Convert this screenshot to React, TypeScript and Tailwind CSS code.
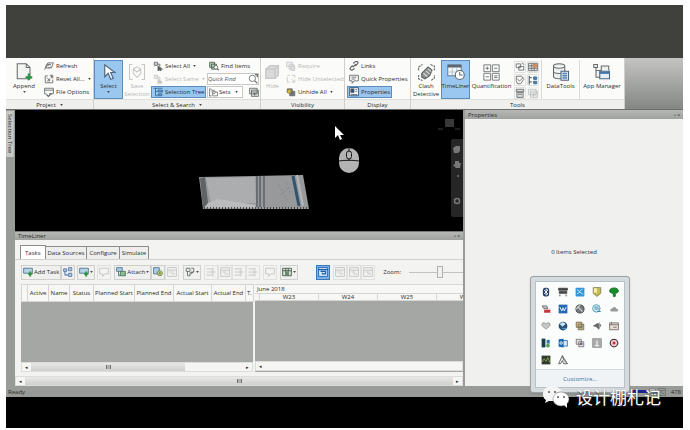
import type { ReactNode } from "react";

type Art = { className?: string; children: ReactNode; box?: string };

function Svg({ className = "h-[10px] w-[10px]", children, box = "0 0 16 16" }: Art) {
  return (
    <svg viewBox={box} className={`shrink-0 ${className}`} fill="none" stroke="#666b6b" strokeWidth="1.4" aria-hidden="true">
      {children}
    </svg>
  );
}

const art: Record<string, ReactNode> = {
  refresh: (<><path d="M3 11 6 3h9l-3 8zM1 14l3-8h7" /><path d="M6 8a3 3 0 0 1 5-2M11 9a3 3 0 0 1-5 1" /></>),
  reset: (<><path d="M2 3h4M2 3v11h12V9M9 2h5v5M5 6l4 5M9 7v4H5" /><path d="M12 3v3" strokeWidth="2.4" /></>),
  file: (<><path d="M1 2h14v9H8M1 2v9h3M1 5h14" /><path d="m4 12 3 3 5-5" strokeWidth="2" /></>),
  select: (<><path d="M2 2h5v5H2zM7 5h4v4" fill="#cfd3d3" /><path d="M8 8v8l2-2 2 2 1-1-1-2h3z" fill="#555" /></>),
  tree: (<><path d="M1 2h14M4 2v12h3M4 7h3" stroke="#366a9d" /><path d="M8 5h7v3H8zM8 11h6v3H8z" fill="#6ba3d5" stroke="#366a9d" /></>),
  find: (<><path d="M1 2h8v8H1zM4 5h8v8H4z" fill="#b7c8b8" stroke="#496950" /><circle cx="11" cy="10" r="3" fill="#fff" /><path d="m13 12 3 3" strokeWidth="2" /></>),
  sets: (<><path d="M1 1v14M1 2h4M1 14h4M5 4h4l2 3h4v7H7z" /><circle cx="9" cy="8" r="2" /></>),
  copy: (<><path d="M1 2h12v9H1zM4 5h11v10H4z" fill="#e5e6e4" /><path d="M4 8h11M7 11h5M9 9v5" /></>),
  require: (<><path d="M1 2h9v7H1zM5 6h8v7H5z" fill="#d7d9d8" /><path d="M8 9h6v6H8z" /></>),
  unselected: (<><path d="M2 2h4M9 2h5v4M2 5v8h4M9 13h5V9" /><path d="m9 8 5 5" /></>),
  unhide: (<><path d="M6 7h8v7H6z" fill="#777" /><path d="M2 3h8v6H2z" fill="#8c8d89" stroke="#666" /><circle cx="5" cy="7" r="3" fill="#d8bb35" stroke="#857b45" strokeWidth="1" /></>),
  links: (<><path d="m6 10 5-5M7 4l3-3c3-2 6 2 3 4l-3 3M9 12l-3 2c-3 2-6-2-3-4l3-3" strokeWidth="2" /></>),
  bubble: (<><path d="M1 2h14v9H8l-3 4v-4H1zM4 5h8M4 8h6" /></>),
  props: (<><path d="M1 1h14v13H1z" fill="#fff" stroke="#214e7a" /><path d="M3 3h5v6H3z" fill="#214e7a" /><path d="M10 4h3M10 7h3M3 12h10" /></>),
  task: (<><path d="M1 2h14v8H1z" fill="#b6d2e5" stroke="#4f7890" /><path d="M8 11h7M11.500 7v8" stroke="#289242" strokeWidth="3" /></>),
  chart: (<><path d="M1 3h5v4H1zM9 1h5v5H9zM3 7v6h6M9 10h5v5H9z" fill="#b8cee7" stroke="#5472a5" /></>),
  attach: (<><path d="M1 1h9v6H1zM4 7v7h3" fill="#aecae4" stroke="#4f7890" /><path d="M7 7h8v7H7z" fill="#8dbd90" stroke="#427758" /></>),
  attach2: (<><path d="M1 1h9v10H1z" fill="#aecae4" stroke="#4f7890" /><circle cx="11" cy="10" r="4" fill="#e4dc77" stroke="#53854c" /><path d="M11 8v4M9 10h4" /></>),
  links2: (<><path d="M2 2h6v5H2zM10 2h4v6h-4M4 7v7h4V9h5" /><path d="m9 12 5-5" /></>),
  row: (<><path d="M1 3h9M1 8h14M1 13h9M11 1v5M11 10v5" /><path d="m9 5 3 3-3 3" /></>),
  note: (<path d="M1 2h14v9H9l-3 4v-4H1z" />),
  columns: (<><path d="M1 2h14v12H1z" fill="#d5ddd5" stroke="#465c4a" /><path d="M6 2v12M10 2v12M1 6h14" stroke="#465c4a" /><path d="M7 7h2v6H7z" fill="#3c6f45" stroke="none" /></>),
  gantt: (<><path d="M1 1h14v14H1zM1 5h14M4 8h6M7 11h6" /></>),
  ganttOn: (<><path d="M1 1h14v14H1z" fill="#d9ebfb" stroke="#1b5fa9" /><path d="M1 4h14M4 7h8v4H7V9" stroke="#1b5fa9" strokeWidth="2" /></>),
  swap: (<><path d="M2 3h7v6H2zM6 7h8v6H6z" /><path d="M11 2c3 0 3 1 3 3" /></>),
  render: (<><path d="M1 2h14v12H1z" fill="#e9eaeb" /><path d="M1 6h14M1 10h14M6 2v12M10 2v12" /><path d="M8 3h6v6H8z" fill="#d98a50" stroke="none" /></>),
  script: (<><path d="M2 2h9l3 5-5 7H4L2 9z" /><path d="m4 6 3 4 6-6" /></>),
  compare: (<><path d="M2 1v14M2 4h4M2 11h4" strokeWidth="2" /><path d="M9 3h5v4H9zM9 10h5v4H9z" fill="#4f83bb" stroke="#356895" /></>),
  batch: (<><path d="M2 2h12v4H2zM3 7h10v8H3zM5 10h6" fill="#dadbd9" /></>),
};

function Glyph({ name, className }: { name: string; className?: string }) {
  return <Svg className={className}>{art[name]}</Svg>;
}

function Caret({ className = "" }: { className?: string }) {
  return (
    <svg viewBox="0 0 4 3" className={`h-[2px] w-[3px] shrink-0 ${className}`} aria-hidden="true">
      <path d="M0 0h4L2 3z" fill="#444" />
    </svg>
  );
}

function Cmd({ icon, text, caret, off, on }: { icon: string; text: string; caret?: boolean; off?: boolean; on?: boolean }) {
  return (
    <button
      type="button"
      disabled={off}
      className={`flex h-3 items-center gap-[2px] self-start whitespace-nowrap border px-px ${
        on ? "border-[#5b8dbd] bg-[#9ac7ef]" : "border-transparent"
      } ${off ? "opacity-35" : ""}`}
    >
      <Glyph name={icon} />
      <span>{text}</span>
      {caret && <Caret className="ml-px" />}
    </button>
  );
}

function Panel({ title, width, caret, children }: { title: string; width: string; caret?: boolean; children: ReactNode }) {
  return (
    <section className={`flex shrink-0 flex-col border-r border-[#cfd0ce] ${width}`}>
      <div className="flex h-[41px] items-stretch bg-[#fbfbfa] pt-[2px]">{children}</div>
      <h2 className="flex h-[10px] items-center justify-center gap-1 border-t border-[#dededc] bg-[#efefed]">
        {title}
        {caret && <Caret />}
      </h2>
    </section>
  );
}

function Big({ text, width, on, off, caret, children }: { text: ReactNode; width: string; on?: boolean; off?: boolean; caret?: boolean; children: ReactNode }) {
  return (
    <button
      type="button"
      disabled={off}
      className={`flex shrink-0 flex-col items-center border pt-px leading-[8px] ${width} ${
        on ? "border-[#5b8dbd] bg-[#9ac7ef]" : "border-transparent"
      } ${off ? "opacity-35" : ""}`}
    >
      <span className="flex h-[20px] items-center">{children}</span>
      <span className="whitespace-nowrap">{text}</span>
      {caret && <Caret className="mt-px" />}
    </button>
  );
}

function Ribbon() {
  return (
    <header className="flex h-[52px] overflow-hidden border-b border-[#6d6f6c] bg-linear-to-b from-[#c4c5c3] to-[#858784]">
      <Panel title="Project" width="w-[88px]" caret>
        <Big text="Append" width="w-9" caret>
          <Svg className="h-[18px] w-[18px]" box="0 0 24 24">
            <path d="M3 1h12l5 5v15H3zM15 1v5h5" fill="#f3f5f3" />
            <path d="M14 19h9M18.500 14v9" stroke="#2b9147" strokeWidth="3" />
          </Svg>
        </Big>
        <div className="flex flex-col gap-px">
          <Cmd icon="refresh" text="Refresh" />
          <Cmd icon="reset" text="Reset All..." caret />
          <Cmd icon="file" text="File Options" />
        </div>
      </Panel>

      <Panel title="Select & Search" width="w-[167px]" caret>
        <Big text="Select" width="w-[29px]" on caret>
          <Svg className="h-[17px] w-[14px]" box="0 0 14 20">
            <path d="M2 1v14l4-4 3 7 3-1-3-7h5z" fill="#fff" stroke="#50677c" />
          </Svg>
        </Big>
        <Big text={<>Save<br />Selection</>} width="w-7" off>
          <Svg className="h-[18px] w-[18px]" box="0 0 24 24">
            <path d="M6 2H2v20h4M18 2h4v20h-4M7 8l5-3 5 3v6l-5 5-5-5zM7 8l5 4 5-4" />
          </Svg>
        </Big>
        <div className="flex w-[56px] flex-col gap-px">
          <Cmd icon="select" text="Select All" caret />
          <Cmd icon="select" text="Select Same" caret off />
          <Cmd icon="tree" text="Selection Tree" on />
        </div>
        <div className="flex flex-1 flex-col gap-px pr-px">
          <Cmd icon="find" text="Find Items" />
          <label className="flex h-3 items-center border border-[#c8c9c7] bg-white">
            <input aria-label="Quick Find" placeholder="Quick Find" className="w-0 min-w-0 flex-1 italic placeholder:text-[#555]" />
            <Svg><circle cx="7" cy="7" r="5" /><path d="m11 11 4 4M11 1h4v4" strokeWidth="2" /></Svg>
          </label>
          <div className="flex h-3 items-center justify-between">
            <button type="button" className="flex h-3 items-center gap-px border border-[#c8c9c7] bg-white px-px">
              <Glyph name="sets" className="h-[9px] w-[9px]" />
              Sets
              <Caret className="mx-[3px]" />
            </button>
            <button type="button" aria-label="Manage sets"><Glyph name="copy" /></button>
          </div>
        </div>
      </Panel>

      <Panel title="Visibility" width="w-[84px]">
        <Big text="Hide" width="w-[23px]" off>
          <Svg className="h-[17px] w-[17px]" box="0 0 20 20">
            <path d="m2 6 5-4h10v11l-4 4H2zM2 6h11v11M13 6l4-4" fill="#9a9c9b" />
          </Svg>
        </Big>
        <div className="flex flex-col gap-px">
          <Cmd icon="require" text="Require" off />
          <Cmd icon="unselected" text="Hide Unselected" off />
          <Cmd icon="unhide" text="Unhide All" caret />
        </div>
      </Panel>

      <Panel title="Display" width="w-[66px]">
        <div className="flex flex-col gap-px pl-[2px]">
          <Cmd icon="links" text="Links" />
          <Cmd icon="bubble" text="Quick Properties" />
          <Cmd icon="props" text="Properties" on />
        </div>
      </Panel>

      <Panel title="Tools" width="w-[214px]">
        <Big text={<>Clash<br />Detective</>} width="w-[30px]">
          <Svg className="h-[19px] w-[19px]" box="0 0 24 24">
            <path d="m6 13 8-8 5 4-3 7-6 4-4-2z" fill="#8d908f" stroke="#5d605f" />
            <path d="m8 13 5 4M11 10l5 4M14 7l4 4" stroke="#d5d6d5" />
            <path d="M2 9V5l5-3M17 2l5 2v5M2 15v5l5 2M18 22l4-3v-4" strokeDasharray="3 1" />
          </Svg>
        </Big>
        <Big text="TimeLiner" width="w-[29px]" on>
          <Svg className="h-[18px] w-[18px]" box="0 0 24 24">
            <path d="M1 3h18v14H1z" fill="#f4f8fa" stroke="#677d8f" />
            <path d="M1 4h18" stroke="#5b6872" strokeWidth="4" />
            <path d="M7 7v9M13 7v6M1 12h12" stroke="#b4c3ce" />
            <circle cx="17" cy="16" r="6" fill="#fff" stroke="#58636b" />
            <path d="M17 12v4h4" />
          </Svg>
        </Big>
        <Big text="Quantification" width="w-[43px]">
          <Svg className="h-[17px] w-[17px]" box="0 0 20 20">
            <g strokeWidth="1">
              <path d="M1 1h8v8H1zM11 1h8v8h-8zM1 11h8v8H1zM11 11h8v8h-8zM3 5h4M5 3v4M13 5h4M3 15h4M13 14h4M13 16h4" />
            </g>
          </Svg>
        </Big>
        <div className="grid w-7 grid-cols-2 grid-rows-3 place-items-center">
          {["swap", "render", "script", "compare", "batch", "copy"].map((n, i) => (
            <button key={n} type="button" aria-label={n} className={`rounded-[1px] border border-[#e0e0de] ${i === 5 ? "opacity-40" : ""}`}>
              <Glyph name={n} className="h-[10px] w-[10px]" />
            </button>
          ))}
        </div>
        <div className="ml-px flex border-l border-[#d9dad8]">
          <Big text="DataTools" width="w-[37px]">
            <Svg className="h-[18px] w-[18px]" box="0 0 24 24">
              <path d="M2 4c0-4 15-4 15 0v14c0 4-15 4-15 0zM2 4c0 4 15 4 15 0M2 11c0 4 15 4 15 0" fill="#ecefed" />
              <path d="M12 11h10v12H12z" fill="#e1eaf2" stroke="#48667f" />
              <path d="M14 14h6M14 17h6M14 20h6" stroke="#4c82b5" strokeWidth="2" />
            </Svg>
          </Big>
          <div className="border-l border-[#d9dad8]">
            <Big text="App Manager" width="w-[44px]">
              <Svg className="h-[18px] w-[18px]" box="0 0 24 24">
                <path d="M1 2h5v4H1zM4 6v13h6M4 10h7V4h10v6" fill="#eef0ef" />
                <path d="M9 11h13v10H9z" fill="#e6eef5" stroke="#48667f" />
                <path d="M9 13h13" stroke="#3f76ab" strokeWidth="3" />
              </Svg>
            </Big>
          </div>
        </div>
      </Panel>
    </header>
  );
}

function Viewport() {
  return (
    <div className="relative h-[121px] overflow-hidden bg-black">
      <svg viewBox="0 0 110 34" className="absolute left-[184px] top-[65px] h-[34px] w-[110px]" aria-label="Model">
        <path d="M0 2 104 0l6 34H4z" fill="#98999a" />
        <path d="M7 3 56 2l1 26H12z" fill="#acadae" />
        <path d="m1 3 5-1 3 26-5 5z" fill="#606266" />
        <path d="m9 28 10-4 38 6-1 3H6z" fill="#b9bbbc" />
        <path d="M58 1v31M61 1v31M65 1v31" stroke="#555861" strokeWidth="1.300" />
        <path d="m94 1 6 30" stroke="#31536f" strokeWidth="3" />
        <path d="m98 0 6 31" stroke="#b4b9bd" strokeWidth="2" />
        <path d="m80 10 9 16M88 8l3 10M82 20l8-8" stroke="#858789" strokeDasharray="2 2" />
        <path d="M5 33h105" stroke="#4b4b4b" strokeWidth="2" strokeDasharray="1 2" />
      </svg>
      <svg viewBox="0 0 10 16" className="absolute left-[319px] top-[15px] h-4 w-[10px]" aria-hidden="true">
        <path d="M1 1v12l3-3 2 5 2-1-2-4h4z" fill="#fff" />
      </svg>
      <svg viewBox="0 0 20 26" className="absolute left-[324px] top-[38px] h-[26px] w-5" aria-hidden="true">
        <rect width="20" height="25" rx="10" fill="#b3b4b3" />
        <path d="M0 13c6-1 14-1 20 0M10 0v3M10 11v2" stroke="#161616" fill="none" />
        <rect x="7.500" y="3" width="5" height="8" rx="2.500" fill="#b3b4b3" stroke="#161616" />
      </svg>
      <svg viewBox="0 0 24 12" className="absolute right-[2px] top-[8px] h-3 w-6" aria-hidden="true">
        <path d="M8 1h9v8H8z" fill="#383838" /><path d="M1 11h5M18 11h5" stroke="#3c3c3c" />
      </svg>
      <svg viewBox="0 0 12 78" className="absolute right-0 top-[29px] h-[78px] w-3" aria-label="Navigation bar">
        <rect width="14" height="78" rx="2" fill="#262626" />
        <path d="m2 9 3-2h4v5l-2 2H3z" fill="#777" />
        <path d="m2 26 2-1V22h4v2h2l-1 5H5z" fill="#777" />
        <circle cx="7" cy="37" r="1" fill="#777" />
        <circle cx="6" cy="62" r="2.500" fill="none" stroke="#777" strokeWidth="1.500" />
      </svg>
    </div>
  );
}

function Tool({ icon, label, text, caret, off, on }: { icon: string; label?: string; text?: string; caret?: boolean; off?: boolean; on?: boolean }) {
  return (
    <button
      type="button"
      aria-label={label}
      disabled={off}
      className={`flex h-[15px] shrink-0 items-center gap-px whitespace-nowrap border px-px ${
        on ? "border-[#3f77b5] bg-[#79afea]" : off ? "border-[#e0e1df]" : "border-[#cfd0ce] bg-[#f0f1ef]"
      }`}
    >
      <Glyph name={icon} className={`h-[10px] w-[10px] ${off ? "opacity-35" : ""}`} />
      {text}
      {caret && <Caret />}
    </button>
  );
}

function Scroll({ thumb, end }: { thumb?: string; end?: boolean }) {
  return (
    <div className="flex h-[10px] items-center border border-[#dddedc] bg-[#f5f5f4]">
      <span className="w-[9px] text-center text-[5px]">◂</span>
      <div className="flex h-full flex-1">
        {thumb && (
          <div className={`flex items-center justify-center bg-linear-to-b from-[#e8e9e7] to-[#cfd0ce] text-[5px] ${thumb}`}>
            <span className="h-1 w-[5px] border-x border-[#727472] bg-[#b0b2b0]" />
          </div>
        )}
      </div>
      {end && <span className="w-[9px] text-center text-[5px]">▸</span>}
    </div>
  );
}

const columns: [string, string][] = [
  ["", "w-[6px]"],
  ["Active", "w-[21px]"],
  ["Name", "w-[21px]"],
  ["Status", "w-6"],
  ["Planned Start", "w-[41px]"],
  ["Planned End", "w-[39px]"],
  ["Actual Start", "w-[38px]"],
  ["Actual End", "w-[34px]"],
  ["T.", "w-[8px]"],
];

function TimeLiner() {
  return (
    <section className="flex flex-col bg-[#f3f4f2]">
      <h2 className="flex h-[9px] items-center justify-between border-t border-[#777976] bg-linear-to-b from-[#b7b8b6] to-[#a0a29f] px-[3px]">
        TimeLiner <span className="text-[5px]">▫ ×</span>
      </h2>
      <div className="flex h-[20px] items-end border-b border-[#d0d1cf] pl-[5px]" role="tablist">
        {["Tasks", "Data Sources", "Configure", "Simulate"].map((t, i) => (
          <button
            key={t}
            type="button"
            role="tab"
            aria-selected={i === 0}
            className={`border border-b-0 ${i === 0 ? "h-[14px] border-[#8c8e8b] bg-white px-1" : "h-[13px] border-l-0 border-[#8c8e8b] bg-[#eeefed] px-[2px]"}`}
          >
            {t}
          </button>
        ))}
      </div>
      <div className="flex h-[24px] items-center overflow-hidden pl-[6px]">
        <Tool icon="task" text="Add Task" />
        <Tool icon="chart" label="Insert task" />
        <div className="ml-[2px] flex gap-[2px]">
          <Tool icon="task" label="Auto-add tasks" caret />
          <Tool icon="note" label="Delete task" off />
        </div>
        <div className="ml-[3px] flex">
          <Tool icon="attach" text="Attach" caret />
          <Tool icon="attach2" label="Auto-attach using rules" />
          <Tool icon="gantt" label="Clear attachment" off />
        </div>
        <div className="ml-1 flex">
          <Tool icon="links2" label="Find items" caret />
        </div>
        <div className="ml-[3px] flex">
          <Tool icon="row" label="Move up" off />
          <Tool icon="gantt" label="Move down" off />
          <Tool icon="row" label="Outdent" off />
          <Tool icon="row" label="Indent" off />
        </div>
        <div className="ml-[3px] flex gap-[3px]">
          <Tool icon="note" label="Add comment" off />
          <Tool icon="columns" label="Columns" caret />
        </div>
        <div className="ml-[18px] flex">
          <Tool icon="ganttOn" label="Show Gantt chart" on />
        </div>
        <div className="ml-[3px] flex">
          <Tool icon="gantt" label="Planned dates" off />
          <Tool icon="gantt" label="Actual dates" off />
          <Tool icon="gantt" label="Planned against actual" off />
        </div>
        <label className="ml-2 flex min-w-0 flex-1 items-center gap-2">
          Zoom:
          <input
            type="range"
            defaultValue={58}
            className="h-3 w-0 min-w-0 flex-1 appearance-none bg-[linear-gradient(#c3c4c2,#c3c4c2)] bg-[length:100%_1px] bg-center bg-no-repeat [&::-webkit-slider-thumb]:h-3 [&::-webkit-slider-thumb]:w-[6px] [&::-webkit-slider-thumb]:appearance-none [&::-webkit-slider-thumb]:border [&::-webkit-slider-thumb]:border-[#b0b1af] [&::-webkit-slider-thumb]:bg-[#f1f2f0]"
          />
        </label>
      </div>
      <div className="flex pl-[6px]">
        <div className="flex w-[234px] shrink-0 flex-col border-r-2 border-[#f3f4f2] bg-[#a5a7a4]">
          <table className="w-full table-fixed border-collapse bg-[#f7f7f6]">
            <thead>
              <tr className="h-[17px]">
                {columns.map(([name, w]) => (
                  <th key={name} scope="col" className={`whitespace-nowrap border border-[#d5d6d4] p-0 text-center text-[6px] font-normal ${w}`}>
                    {name}
                  </th>
                ))}
              </tr>
            </thead>
          </table>
          <div className="h-[60px]" />
          <Scroll thumb="w-[154px]" end />
        </div>
        <div className="min-w-0 flex-1 overflow-hidden bg-[#a5a7a4]">
          <div className="h-[9px] border-t border-[#d5d6d4] bg-[#f7f7f6] pl-[2px] leading-[8px]">June 2018</div>
          <div className="flex h-[8px] border-y border-[#d5d6d4] bg-[#f7f7f6] pl-1 leading-[7px]">
            {["W23", "W24", "W25", "W26"].map((w) => (
              <span key={w} className="w-[59px] shrink-0 border-l border-[#d5d6d4] text-center">{w}</span>
            ))}
          </div>
          <div className="h-[60px]" />
          <Scroll />
        </div>
      </div>
      <div className="pt-1">
        <Scroll thumb="w-full" end />
      </div>
    </section>
  );
}

const tray: ReactNode[] = [
  <><rect x="3" y="1" width="10" height="14" rx="4" fill="#263f62" stroke="none" /><path d="m5 5 6 6-3 2V3l3 2-6 6" stroke="#fff" /></>,
  <><path d="M1 2h14v3H1zM2 7h12v3H2zM3 12v3M13 12v3" fill="#444" stroke="#444" /></>,
  <><rect x="1" y="1" width="14" height="14" rx="1" fill="#3196d8" stroke="none" /><path d="m3 4 4 3 5-4M3 11l5-3 5 4" stroke="#d3effc" /></>,
  <><path d="M2 1h12v9l-6 5-6-5z" fill="#c8bb52" stroke="#857f52" /><path d="M3 2h5v7H3z" fill="#f3efac" stroke="none" /></>,
  <><path d="M1 6c0-6 14-6 14 0 0 4-4 3-5 5v4H7v-4C5 9 1 10 1 6z" fill="#158c27" stroke="#176f23" /></>,
  <><path d="M2 3h7l2 4H4z" fill="#c9cac8" /><path d="M5 9h10v5H5z" fill="#c13a3b" stroke="none" /></>,
  <><path d="M1 1h14v14H1z" fill="#2469b7" stroke="none" /><path d="m3 5 3 6 2-5 2 5 3-6" stroke="#fff" /></>,
  <><circle cx="8" cy="8" r="6.500" fill="#71777a" stroke="#444" /><path d="m4 4 8 8M2 8l6-6" stroke="#c8cbcc" strokeWidth="2" /></>,
  <><circle cx="7" cy="7" r="6" stroke="#4c9ab7" fill="#d5edf5" /><path d="M4 5h6M4 8h8M8 12h6" stroke="#347f9f" /></>,
  <><path d="M2 11c0-4 3-3 4-5 3-3 6 0 6 2 4 0 3 4 1 4H4z" fill="#989a9a" stroke="none" /></>,
  <><path d="M2 4c3-3 6 1 6 1s3-4 6-1c2 4-3 6-6 9-3-3-8-5-6-9z" fill="#c7c9c8" stroke="#8b8d8c" /></>,
  <><circle cx="8" cy="8" r="7" fill="#254d72" stroke="none" /><path d="M3 5c3-5 8-3 9 0L7 9z" fill="#c6e1ef" stroke="none" /><path d="M7 12h7" stroke="#53a0cf" strokeWidth="2" /></>,
  <><path d="M2 2h9v8H2zM5 5h9v9H5z" fill="#d4bf89" stroke="#766c54" /><path d="M7 8h5M7 11h5" /></>,
  <><path d="m1 8 8-5 6 3-4 8-4-4z" fill="#6a6c6a" stroke="none" /><path d="M12 2v9" stroke="#aaa" /></>,
  <><path d="M1 3h14v11H1zM1 6h14M4 2v4M7 10h5" fill="#e8dfd8" stroke="#756d67" /></>,
  <><path d="M1 1h6v14H1z" fill="#153e45" stroke="none" /><path d="M9 3h5v6H9z" fill="#3774ad" stroke="none" /><circle cx="11" cy="12" r="3" fill="#4ca458" stroke="none" /></>,
  <><path d="M7 4h8v9H7z" fill="#d9e9f5" stroke="#2c73b5" /><path d="m1 2 8-1v14l-8-1z" fill="#176ab1" stroke="none" /><circle cx="5" cy="8" r="2" stroke="#fff" /></>,
  <><path d="M2 2h8v8H2zM6 6h8v8H6z" fill="#dedfdf" stroke="#777" /><path d="M8 8h4v3H8z" fill="#77549b" stroke="none" /></>,
  <><path d="M1 1h14v14H1z" fill="#aaa" stroke="#999" /><path d="M8 4v8M5 12h6" stroke="#f2f2f2" strokeWidth="2" /></>,
  <><circle cx="8" cy="8" r="6" fill="#f1dcdc" stroke="#5b3c40" strokeWidth="2" /><circle cx="8" cy="8" r="2.500" fill="#c62d3d" stroke="none" /></>,
  <><path d="M1 1h14v14H1z" fill="#303c2d" stroke="none" /><path d="m2 11 3-5 3 4 3-6 3 8" stroke="#97a34e" /></>,
  <><path d="m1 14 6-13 8 13H9L7 9l-3 5zM7 1l2 7 6 6" fill="#eee" stroke="#5c5e5d" /></>,
];

function Tray() {
  return (
    <aside className="absolute bottom-[35px] right-[53px] w-[100px] rounded-[3px] border border-[#9aa2a7] bg-[#d5dadd] p-1 shadow-sm">
      <div className="border border-[#b9c1c6] bg-[#fbfcfc]">
        <div className="grid h-[87px] grid-cols-5 grid-rows-5 place-items-center p-px">
          {tray.map((icon, i) => (
            <Svg key={i} className="h-[10px] w-[10px]">{icon}</Svg>
          ))}
        </div>
        <div className="flex h-[18px] items-center justify-center border-t border-[#d3dade] bg-[#eff3f5]">
          <a href="#customize" className="text-[6px] text-[#3f6f9e]">Customize...</a>
        </div>
      </div>
    </aside>
  );
}

function Watermark() {
  return (
    <div className="absolute bottom-[19px] right-[22px] flex items-center gap-[6px] text-white">
      <svg viewBox="0 0 28 24" className="h-6 w-7" aria-hidden="true">
        <path d="M10 1C5 1 1 4 1 9c0 3 1 5 3 6l-1 3 4-2h5c-1-6 3-10 8-10-2-3-6-5-10-5z" fill="#f5f5f5" />
        <ellipse cx="19" cy="14" rx="8" ry="7" fill="#fff" stroke="#777" strokeWidth="0.500" />
        <path d="m22 20 3 3v-5z" fill="#fff" />
        <g fill="#565856"><circle cx="7" cy="7" r="1" /><circle cx="13" cy="7" r="1" /><circle cx="16" cy="12" r="1" /><circle cx="22" cy="12" r="1" /></g>
      </svg>
      <span className="font-['Noto_Sans_CJK_SC',sans-serif] text-[17px] leading-5 [text-shadow:0_1px_2px_#333]">设计棚札记</span>
    </div>
  );
}

export default function App() {
  return (
    <div className="min-h-screen bg-white pb-[2px] pl-[6px] pr-[7px] pt-[5px] font-['Open_Sans','Noto_Sans',sans-serif] text-[6px] leading-[8px] text-[#2b2b2b]">
      <main className="relative flex min-h-[calc(100vh-7px)] flex-col overflow-hidden bg-black">
        <div className="h-[53px] bg-[#40413d]" />
        <Ribbon />
        <div className="flex bg-[#999b98]">
          <div className="w-[9px] shrink-0 pt-px">
            <button type="button" className="flex h-[46px] w-2 items-center justify-center whitespace-nowrap border-y border-[#bbbdba] bg-[#c9cac8] leading-[8px] [writing-mode:vertical-rl]">
              Selection Tree
            </button>
          </div>
          <div className="min-w-0 flex-1">
            <Viewport />
            <TimeLiner />
          </div>
          <section className="ml-[2px] flex w-[218px] shrink-0 flex-col bg-[#f0f1ef]">
            <h2 className="flex h-[9px] items-center justify-between bg-linear-to-b from-[#b7b8b6] to-[#a0a29f] px-[3px]">
              Properties <span className="text-[5px]">▫ ×</span>
            </h2>
            <p className="pt-[129px] text-center">0 Items Selected</p>
          </section>
        </div>
        <footer className="flex h-[11px] items-center justify-between bg-[#999b98] px-[2px]">
          <span>Ready</span>
          <span className="flex items-center gap-px">
            <span className="h-[3px] w-4 bg-[#20238c]" />
            <Glyph name="copy" className="h-2 w-2" />
            <Glyph name="gantt" className="h-2 w-2" />
            <span className="ml-1">478</span>
          </span>
        </footer>
        <Tray />
        <Watermark />
      </main>
    </div>
  );
}
